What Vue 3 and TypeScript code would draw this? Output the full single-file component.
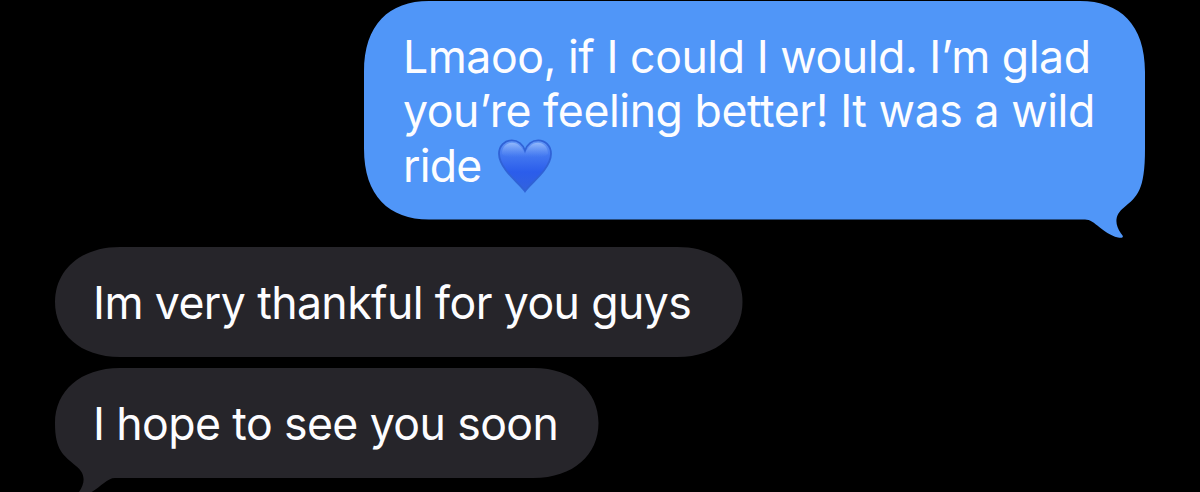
<script setup lang="ts">
interface Line {
  text: string
  spacing: number
  heart?: boolean
}

interface Message {
  id: string
  from: 'me' | 'them'
  width: number
  height: number
  tail: boolean
  lines: Line[]
}

const messages: Message[] = [
  {
    id: 'wild-ride',
    from: 'me',
    width: 781,
    height: 218.5,
    tail: true,
    lines: [
      { text: 'Lmaoo, if I could I would. I’m glad', spacing: -0.46 },
      { text: 'you’re feeling better! It was a wild', spacing: -0.45 },
      { text: 'ride', spacing: -0.8, heart: true },
    ],
  },
  {
    id: 'thankful',
    from: 'them',
    width: 687.5,
    height: 110,
    tail: false,
    lines: [{ text: 'Im very thankful for you guys', spacing: -0.6 }],
  },
  {
    id: 'see-you',
    from: 'them',
    width: 543.5,
    height: 110,
    tail: true,
    lines: [{ text: 'I hope to see you soon', spacing: -0.6 }],
  },
]

// Outline with smooth corners; the tail sits at the bottom right and is mirrored for received messages.
function outline({ width: w, height: h, tail }: Message): string {
  const rx = 65
  const ry = Math.min(71, h / 2)
  const cx = 25
  const cy = 23.5
  const corner = tail
    ? `V${h - ry} C${w} ${h - 28} ${w - 8} ${h - 23} ${w - 21} ${h - 12} C${w - 30} ${h - 5} ${w - 31} ${h + 4} ${w - 24} ${h + 14} C${w - 20} ${h + 18} ${w - 23} ${h + 19} ${w - 27} ${h + 18} C${w - 43} ${h + 14} ${w - 50} ${h} ${w - 60} ${h}`
    : `V${h - ry} C${w} ${h - cy} ${w - cx} ${h} ${w - rx} ${h}`
  return `M${rx} 0 H${w - rx} C${w - cx} 0 ${w} ${cy} ${w} ${ry} ${corner} H${rx} C${cx} ${h} 0 ${h - cy} 0 ${h - ry} V${ry} C0 ${cy} ${cx} 0 ${rx} 0 Z`
}
</script>

<template>
  <main class="chat">
    <article
      v-for="m in messages"
      :key="m.id"
      class="bubble"
      :class="[m.from, { tailed: m.tail }]"
      :style="{ width: m.width + 'px', height: m.height + 'px' }"
    >
      <svg class="shape" :width="m.width" :height="m.height" aria-hidden="true">
        <path :d="outline(m)" />
      </svg>
      <p class="text">
        <span v-for="line in m.lines" :key="line.text" class="line">
          <span class="words" :style="{ letterSpacing: line.spacing + 'px' }">{{ line.text }}</span>
          <svg v-if="line.heart" class="heart" viewBox="0 0 54 54" role="img" aria-label="blue heart">
            <defs>
              <linearGradient id="heart-fill" x1="0" y1="0" x2="0" y2="1">
                <stop offset="0" stop-color="#6699f6" />
                <stop offset=".3" stop-color="#4277f0" />
                <stop offset=".62" stop-color="#2b5deb" />
                <stop offset="1" stop-color="#3262de" />
              </linearGradient>
              <linearGradient id="heart-shine" x1="0" y1="0" x2="0" y2="1">
                <stop offset="0" stop-color="#94b9fb" stop-opacity=".95" />
                <stop offset="1" stop-color="#5c8ff5" stop-opacity="0" />
              </linearGradient>
            </defs>
            <path
              d="M27 52.3C23 46.5 14 39.5 8 31.5C3.5 25.5 1 20.5 1 14.8C1 7 6.6 1.3 13.8 1.3C20 1.3 25 5.5 27 11.5C29 5.5 34 1.3 40.2 1.3C47.4 1.3 53 7 53 14.8C53 20.5 50.5 25.5 46 31.5C40 39.5 31 46.5 27 52.3Z"
              fill="url(#heart-fill)"
              stroke="#3062d6"
              stroke-width="1.8"
            />
            <path
              d="M4 15C4 8 8.5 3.8 14 3.8C20 3.8 24.5 8.5 27 15C29.5 8.5 34 3.8 40 3.8C45.5 3.8 50 8 50 15C45 20 35 18 27 18C19 18 9 20 4 15Z"
              fill="url(#heart-shine)"
            />
          </svg>
        </span>
      </p>
    </article>
  </main>
</template>

<style>
html,
body {
  background: #000;
}
</style>

<style scoped>
.chat {
  box-sizing: border-box;
  width: 1200px;
  height: 492px;
  padding: 1px 55px 0 54.5px;
  overflow: hidden;
  display: flex;
  flex-direction: column;
  align-items: flex-start;
  background: #000;
  font-family: Inter, "Liberation Sans", sans-serif;
}

.bubble {
  position: relative;
  flex: none;
  box-sizing: border-box;
  color: #fdfdff;
}

.bubble + .bubble {
  margin-top: 11px;
}

.me {
  align-self: flex-end;
  padding: 28.5px 0 0 38.5px;
}

.bubble.me + .them {
  margin-top: 27.5px;
}

.them {
  padding: 28.5px 0 0 38.5px;
}

.shape {
  position: absolute;
  inset: 0;
  overflow: visible;
  fill: #26252a;
}

.me .shape {
  fill: #5096f8;
}

.them .shape {
  transform: scaleX(-1);
}

.text {
  position: relative;
  margin: 0;
  font-size: 45.5px;
  line-height: 54.5px;
  white-space: nowrap;
}

.line {
  display: flex;
  align-items: center;
  height: 54.5px;
}

.words {
  transform: scaleX(0.98);
  transform-origin: left center;
}

.heart {
  width: 54px;
  height: 54px;
  margin-left: 15px;
}
</style>
